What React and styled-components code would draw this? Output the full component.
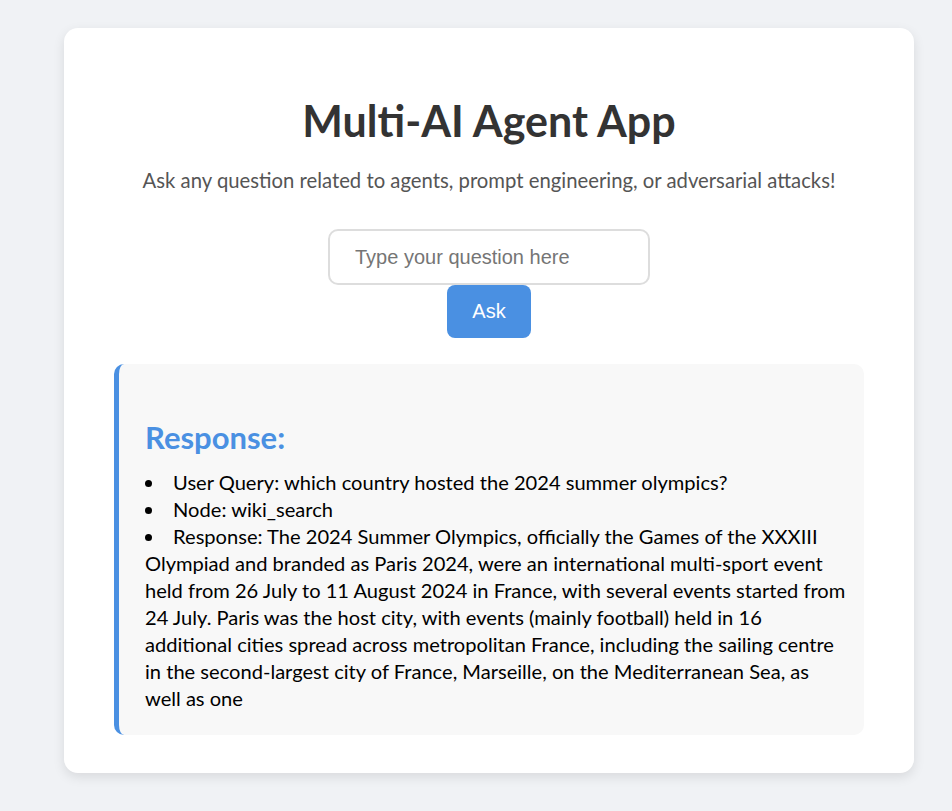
import styled, {createGlobalStyle} from "styled-components";

const GlobalStyle = createGlobalStyle`
  body {
    margin: 0;
    background-color: #f0f2f5;
    font-family: "Segoe UI", Lato, "Open Sans", sans-serif;
  }
`

const Page = styled.div`
  padding: 28px 38px 39px 64px;
`

const Card = styled.div`
  width: 750px;
  padding: 40px 50px 38px;
  background-color: white;
  border-radius: 14px;
  box-shadow: 0 4px 12px rgba(0, 0, 0, 0.1);
  text-align: center;
`

const Title = styled.h1`
  margin: 29px 0 22px;
  font-size: 43px;
  line-height: 48px;
  font-weight: bold;
  color: #333;
`

const Subtitle = styled.p`
  margin: 0 0 35px;
  font-size: 20.3px;
  line-height: 27px;
  color: #555;
`

const Form = styled.form`
  display: flex;
  flex-direction: column;
  align-items: center;
  margin-bottom: 26px;
`

const Input = styled.input`
  width: 322px;
  height: 56px;
  box-sizing: border-box;
  padding: 0 25px;
  border: 2px solid #ddd;
  border-radius: 10px;
  font-family: "Liberation Sans", Arial, sans-serif;
  font-size: 20px;
  color: #333;
  outline: none;

  &::placeholder {
    color: #757575;
  }
`

const Button = styled.button`
  width: 84px;
  height: 53px;
  border: none;
  border-radius: 8px;
  background-color: #4a90e2;
  color: white;
  font-family: "Liberation Sans", Arial, sans-serif;
  font-size: 20px;
  cursor: pointer;
`

const ResponseBox = styled.div`
  padding: 55px 16px 23px 26px;
  background-color: #f8f8f8;
  border-left: 5px solid #4a90e2;
  border-radius: 10px;
  text-align: left;
`

const ResponseTitle = styled.h2`
  margin: 0 0 14px;
  font-size: 31px;
  line-height: 36px;
  font-weight: bold;
  color: #4a90e2;
`

const List = styled.ul`
  margin: 0;
  padding: 0;
  list-style: disc inside;
`

const ListItem = styled.li`
  font-size: 20.1px;
  line-height: 27px;
  color: #000;
`

const App = () => {
    return (
        <Page>
            <GlobalStyle/>
            <Card>
                <Title>Multi-AI Agent App</Title>
                <Subtitle>Ask any question related to agents, prompt engineering, or adversarial attacks!</Subtitle>
                <Form onSubmit={e => e.preventDefault()}>
                    <Input type="text" placeholder="Type your question here"/>
                    <Button type="submit">Ask</Button>
                </Form>
                <ResponseBox>
                    <ResponseTitle>Response:</ResponseTitle>
                    <List>
                        <ListItem>User Query: which country hosted the 2024 summer olympics?</ListItem>
                        <ListItem>Node: wiki_search</ListItem>
                        <ListItem>Response: The 2024 Summer Olympics, officially the Games of the XXXIII Olympiad and
                            branded as Paris 2024, were an international multi-sport event held from 26 July to 11
                            August 2024 in France, with several events started from 24 July. Paris was the host city,
                            with events (mainly football) held in 16 additional cities spread across metropolitan
                            France, including the sailing centre in the second-largest city of France, Marseille, on
                            the Mediterranean Sea, as well as one</ListItem>
                    </List>
                </ResponseBox>
            </Card>
        </Page>
    )
}

export default App
